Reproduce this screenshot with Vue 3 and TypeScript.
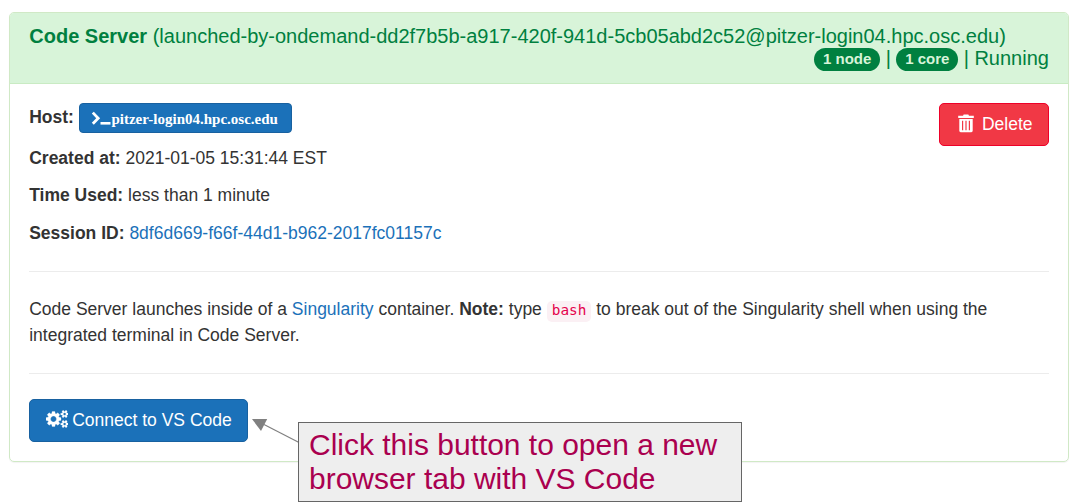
<script setup lang="ts">
interface Session {
  name: string
  owner: string
  host: string
  created: string
  used: string
  id: string
}

const session: Session = {
  name: 'Code Server',
  owner: '(launched-by-ondemand-dd2f7b5b-a917-420f-941d-5cb05abd2c52@pitzer-login04.hpc.osc.edu)',
  host: 'pitzer-login04.hpc.osc.edu',
  created: '2021-01-05 15:31:44 EST',
  used: 'less than 1 minute',
  id: '8df6d669-f66f-44d1-b962-2017fc01157c',
}

// Outline of a small cog centred on (1536, 1408); it is drawn twice.
const smallCog =
  'M1920 1338v140q0 16-149 31-12 27-30 52 51 113 51 138 0 4-4 7-122 71-124 71-8 0-46-47t-52-68q-20 2-30 2t-30-2q-14 21-52 68t-46 47q-2 0-124-71-4-3-4-7 0-25 51-138-18-25-30-52-149-15-149-31v-140q0-16 149-31 13-29 30-52-51-113-51-138 0-4 4-7 4-2 35-20t59-34 30-16q8 0 46 46.500t52 67.500q20-2 30-2t30 2q51-71 92-112l6-2q4 0 124 70 4 3 4 7 0 25-51 138 17 23 30 52 149 15 149 31zM1664 1408q0-52-38-90t-90-38-90 38-38 90q0 53 37.500 90.500t90.500 37.500 90.500-37.500 37.500-90.500z'
</script>

<template>
  <main class="page">
    <section class="panel">
      <header class="heading">
        <div class="title"><strong>{{ session.name }}</strong> {{ session.owner }}</div>
        <div class="status">
          <span class="badge">1 node</span> | <span class="badge">1 core</span> | Running
        </div>
      </header>
      <div class="body">
        <div class="top">
          <div class="details">
            <div class="host">
              <strong>Host:</strong>
              <a class="btn host-btn">
                <svg class="prompt" width="20" height="16" viewBox="0 0 20 16">
                  <path d="M1.8 2.6 L7.2 8.2 L1.8 13.8" fill="none" stroke="#fff" stroke-width="2.8" />
                  <path d="M9.500 12h10v2.600h-10z" fill="#fff" />
                </svg>
                <span>{{ session.host }}</span>
              </a>
            </div>
            <p><strong>Created at:</strong> {{ session.created }}</p>
            <p><strong>Time Used:</strong> {{ session.used }}</p>
            <p><strong>Session ID:</strong> <a class="link">{{ session.id }}</a></p>
          </div>
          <button class="btn delete">
            <svg width="16" height="19" viewBox="0 0 16 19">
              <path fill="#fff" fill-rule="evenodd" d="M5.2 1.2Q5.2 .5 6 .5h4q.8 0 .8.7v.5h5v2.2H.2V1.7h5zM1.3 5h13.4v11.8q0 1.4-1.4 1.4H2.7q-1.4 0-1.4-1.4zM4 6.8v9.4h1.2V6.8zm3.4 0v9.4h1.2V6.8zm3.4 0v9.4H12V6.8z" />
            </svg>
            <span>Delete</span>
          </button>
        </div>
        <hr>
        <p class="note">
          Code Server launches inside of a <a class="link">Singularity</a> container. <strong>Note:</strong> type <code>bash</code> to break out of the Singularity shell when using the integrated terminal in Code Server.
        </p>
        <hr>
        <button class="btn connect">
          <svg width="22.5" height="18" viewBox="0 128 1920 1536">
            <g fill="#fff" fill-rule="evenodd" stroke="#fff" stroke-width="24">
              <path d="M896 896q0-106-75-181t-181-75-181 75-75 181 75 181 181 75 181-75 75-181zM1280 805v185q0 10-7 19.500t-16 10.500l-155 24q-11 35-32 76 34 48 90 115 7 11 7 20 0 12-7 19-23 30-82.500 89.500t-78.500 59.500q-11 0-21-7l-115-90q-37 19-77 31-11 108-23 155-7 24-30 24h-186q-11 0-20-7.500t-10-17.500l-23-153q-34-10-75-31l-118 89q-7 7-20 7-11 0-21-8-144-133-144-160 0-9 7-19 10-14 41-53t47-61q-23-44-35-82l-152-24q-10-1-17-9.500t-7-19.500v-185q0-10 7-19.500t16-10.500l155-24q11-35 32-76-34-48-90-115-7-11-7-20 0-12 7-20 22-30 82-89t79-59q11 0 21 7l115 90q34-18 77-32 11-108 23-154 7-24 30-24h186q11 0 20 7.500t10 17.500l23 153q34 10 75 31l118-89q8-7 20-7 11 0 21 8 144 133 144 160 0 8-7 19-12 16-42 54t-45 60q23 48 34 82l152 23q10 2 17 10.500t7 19.500z" />
              <path :d="smallCog" transform="translate(1588 1321) scale(0.87) translate(-1536 -1408)" />
              <path :d="smallCog" transform="translate(1588 471) scale(0.87) translate(-1536 -1408)" />
            </g>
          </svg>
          <span>Connect to VS Code</span>
        </button>
      </div>
    </section>
    <svg class="arrow" width="50" height="28" viewBox="0 0 50 28">
      <path d="M12 5.5 L48 24" stroke="#808080" stroke-width="1.2" />
      <path d="M0 0h15.2L9 12z" fill="#808080" />
    </svg>
    <aside class="callout">Click this button to open a new<br>browser tab with VS Code</aside>
  </main>
</template>

<style>
body {
  margin: 0;
  background: #fff;
}
</style>

<style scoped>
.page {
  position: relative;
  box-sizing: border-box;
  width: 1081px;
  height: 502px;
  padding: 12px 12.5px 0 9px;
  overflow: hidden;
  font: 17.5px/25px "Liberation Sans", Arial, sans-serif;
  color: #333;
}
.panel {
  box-sizing: border-box;
  height: 450px;
  border: 1px solid #d0e9c6;
  border-radius: 5px;
  box-shadow: 0 1px 1px rgba(0, 0, 0, 0.05);
}
.heading {
  box-sizing: border-box;
  height: 71px;
  padding: 12px 18.6px 0 19.3px;
  border-bottom: 1px solid #c9ebc3;
  border-radius: 4px 4px 0 0;
  background: #d8f4d9;
  color: #008040;
  font-size: 20px;
  line-height: 22px;
  white-space: nowrap;
}
.status {
  text-align: right;
}
.badge {
  display: inline-block;
  padding: 3px 8.75px 4.5px;
  border-radius: 12.5px;
  background: #008040;
  color: #d8f4d9;
  font-size: 15px;
  font-weight: bold;
  line-height: 15px;
  vertical-align: middle;
}
.body {
  padding: 19px 18.6px 0 19.2px;
}
.top {
  display: flex;
  justify-content: space-between;
  align-items: flex-start;
}
.host {
  display: flex;
  align-items: flex-start;
  gap: 5px;
  height: 30px;
  margin-bottom: 12.5px;
}
.host strong {
  padding-top: 2px;
}
p {
  margin: 0 0 12.5px;
}
.details p:last-child {
  margin-bottom: 0;
}
.btn {
  box-sizing: border-box;
  display: flex;
  align-items: center;
  border: 1px solid #1861a0;
  border-radius: 5px;
  background: #1b71b9;
  color: #fff;
  font: 17.5px/25px "Liberation Sans", Arial, sans-serif;
  white-space: nowrap;
}
.host-btn {
  width: 213px;
  height: 30px;
  padding: 2px 0 0 11.5px;
  border-radius: 4px;
  font: bold 15px/22px "Liberation Serif", "Times New Roman", serif;
}
.prompt {
  margin-top: -2px;
}
.delete {
  width: 110px;
  height: 43px;
  padding: 0 0 0 18px;
  gap: 8px;
  border-color: #ee0028;
  background: #f13845;
}
.delete svg {
  margin-top: -2px;
}
.connect {
  width: 219px;
  height: 43px;
  padding: 0 0 0 15.5px;
  gap: 4px;
}
.connect svg {
  margin-top: -2px;
}
.link {
  color: #1b71b9;
}
hr {
  height: 1px;
  margin: 25px 0;
  border: 0;
  background: #ececec;
}
.note {
  margin: -1px 0 0;
  line-height: 26px;
}
code {
  padding: 1px 5px 4px;
  border-radius: 5px;
  background: #fbf0f4;
  color: #e4004b;
  font: 14.4px/16px "DejaVu Sans Mono", monospace;
}
.arrow {
  position: absolute;
  left: 252px;
  top: 419px;
}
.callout {
  position: absolute;
  left: 298px;
  top: 422px;
  box-sizing: border-box;
  width: 444px;
  height: 80px;
  padding: 5px 10px;
  border: 1px solid #666;
  background: #eee;
  color: #aa004f;
  font-size: 29.97px;
  line-height: 34px;
  white-space: nowrap;
}
</style>
